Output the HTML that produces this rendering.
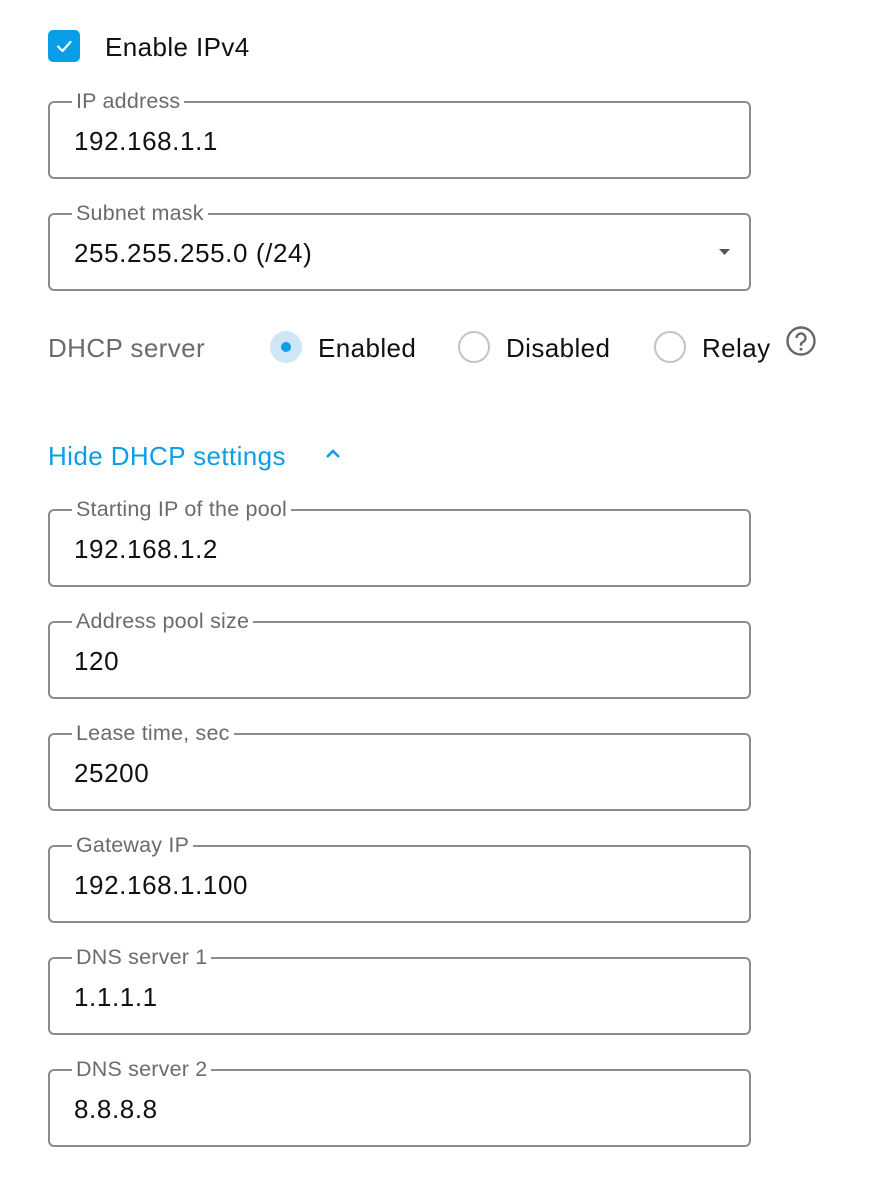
<!DOCTYPE html>
<html><head><style>
body{margin:0;width:874px;height:1178px;background:#fff;font-family:"Liberation Sans",Arial,sans-serif;position:relative;overflow:hidden}
.a{position:absolute}
.f{position:absolute;left:48px;width:699px;height:74px;border:2px solid #8c8c8c;border-radius:6px}
.f .l{position:absolute;top:-14px;left:22px;background:#fff;padding:0 4px;font-size:21.5px;color:#6b6b6b;line-height:24px;letter-spacing:0.2px}
.f .v{position:absolute;left:24px;top:23px;font-size:26px;color:#111;line-height:30px;letter-spacing:0.6px}
.rad{position:absolute;width:28px;height:28px;border:2px solid #c4c4c4;border-radius:50%;top:331px}
.t{position:absolute;font-size:26px;line-height:30px;color:#111;letter-spacing:0.4px}
</style></head><body>
<div class="a" style="left:48px;top:30px;width:32px;height:32px;background:#0a9ee6;border-radius:5px">
<svg width="32" height="32"><path d="M10 16.5l4.5 4.5L22.5 12" stroke="#fff" stroke-width="2.2" fill="none" stroke-linecap="round" stroke-linejoin="round"/></svg></div>
<div class="t" style="left:105px;top:32px">Enable IPv4</div>

<div class="f" style="top:101px"><div class="l">IP address</div><div class="v">192.168.1.1</div></div>
<div class="f" style="top:213px"><div class="l">Subnet mask</div><div class="v">255.255.255.0 (/24)</div>
<svg class="a" style="left:668px;top:32px" width="14" height="10"><path d="M1 2h11l-5.5 6z" fill="#555"/></svg></div>

<div class="t" style="left:48px;top:333px;color:#6b6b6b">DHCP server</div>
<div class="a" style="left:270px;top:331px;width:32px;height:32px;border-radius:50%;background:#cfe6f6"></div>
<div class="a" style="left:281px;top:342px;width:10px;height:10px;border-radius:50%;background:#0a9ee6"></div>
<div class="t" style="left:318px;top:333px">Enabled</div>
<div class="rad" style="left:458px"></div>
<div class="t" style="left:506px;top:333px">Disabled</div>
<div class="rad" style="left:654px"></div>
<div class="t" style="left:702px;top:333px">Relay</div>
<svg class="a" style="left:785px;top:325px" width="32" height="32"><circle cx="16" cy="16" r="13.5" stroke="#666" stroke-width="2.4" fill="none"/><path d="M11.5 13a4.5 4.5 0 1 1 6.3 4.1c-1.2.6-1.8 1.3-1.8 2.6v1" stroke="#666" stroke-width="2.4" fill="none"/><circle cx="16" cy="24.3" r="1.5" fill="#666"/></svg>

<div class="t" style="left:48px;top:441px;color:#0a9ee6">Hide DHCP settings</div>
<svg class="a" style="left:324px;top:447px" width="18" height="14"><path d="M3 10l6-6 6 6" stroke="#0a9ee6" stroke-width="2.6" fill="none"/></svg>

<div class="f" style="top:509px"><div class="l">Starting IP of the pool</div><div class="v">192.168.1.2</div></div>
<div class="f" style="top:621px"><div class="l">Address pool size</div><div class="v">120</div></div>
<div class="f" style="top:733px"><div class="l">Lease time, sec</div><div class="v">25200</div></div>
<div class="f" style="top:845px"><div class="l">Gateway IP</div><div class="v">192.168.1.100</div></div>
<div class="f" style="top:957px"><div class="l">DNS server 1</div><div class="v">1.1.1.1</div></div>
<div class="f" style="top:1069px"><div class="l">DNS server 2</div><div class="v">8.8.8.8</div></div>
</body></html>
